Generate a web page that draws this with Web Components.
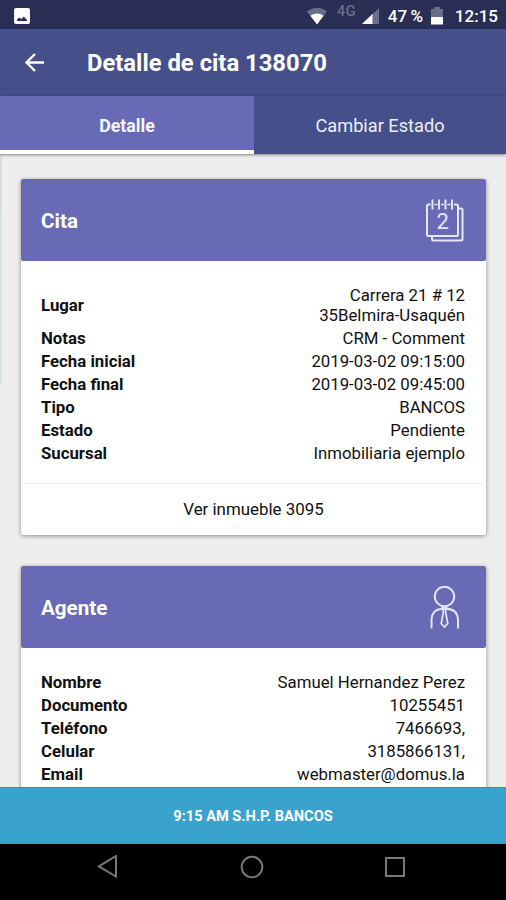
<!DOCTYPE html>
<html lang="es">
<head>
<meta charset="utf-8">
<meta name="viewport" content="width=device-width, initial-scale=1">
<title>Detalle de cita</title>
<style>
    body { margin: 0; font-family: Roboto, "Liberation Sans", sans-serif; color: #111; }
</style>
</head>
<body>
<cita-app></cita-app>

<script>
// --- Component: Android status bar ---
class StatusBar extends HTMLElement {
    constructor() {
        super();
        this.attachShadow({ mode: 'open' });
        this.shadowRoot.innerHTML = `
            <style>
                :host {
                    display: flex;
                    align-items: center;
                    box-sizing: border-box;
                    height: 29px;
                    padding: 2px 8px 0 14px;
                    background: #292e54;
                    color: #fff;
                    font-size: 17px;
                    font-weight: 500;
                    line-height: 20px;
                    white-space: nowrap;
                }
                svg { display: block; flex: none; }
                .space { flex: 1; }
                .wifi { margin-right: 9px; }
                .net { color: #6a6e8b; font-size: 15px; line-height: 16px; margin: 0 6px 9px 0; width: 19px; }
                .signal { margin-right: 9px; }
                .level { margin-right: 8px; width: 35px; font-size: 17px; word-spacing: -1px; }
                .battery { margin-right: 12px; }
            </style>
            <svg width="16" height="16" viewBox="0 0 16 16">
                <rect width="16" height="16" rx="2" fill="#fff"/>
                <path d="M3 13V11.5L5.2 9.6 7.4 11 9.8 8.6 13 12v1z" fill="#292e54"/>
            </svg>
            <span class="space"></span>
            <svg class="wifi" width="22" height="18" viewBox="0 0 22 18">
                <path d="M1 4.5Q11-3 21 4.5L11 17.5z" fill="#6a6e8b"/>
                <path d="M4.4 8.8Q11 4 17.6 8.8L11 17.5z" fill="#fff"/>
            </svg>
            <span class="net">4G</span>
            <svg class="signal" width="17" height="16" viewBox="0 0 17 16">
                <path d="M0 16 17 0V16z" fill="#6a6e8b"/>
                <path d="M0 16 10.5 6V16z" fill="#fff"/>
            </svg>
            <span class="level"><slot name="level"></slot></span>
            <svg class="battery" width="12" height="18" viewBox="0 0 12 18">
                <path d="M0 2H3V0H9V2H12V10H0z" fill="#6a6e8b"/>
                <path d="M0 10H12V17.5H0z" fill="#fff"/>
            </svg>
            <slot name="time"></slot>
        `;
    }
}
customElements.define('status-bar', StatusBar);

// --- Component: toolbar with back arrow ---
class AppToolbar extends HTMLElement {
    constructor() {
        super();
        this.attachShadow({ mode: 'open' });
        this.shadowRoot.innerHTML = `
            <style>
                :host {
                    display: flex;
                    align-items: center;
                    box-sizing: border-box;
                    height: 67px;
                    padding: 0 24px;
                    gap: 42px;
                    background: #454f8a;
                    color: #fff;
                    font-size: 23.8px;
                    font-weight: 700;
                }
                svg { display: block; }
            </style>
            <svg width="21" height="20" viewBox="0 0 21 20" fill="none" stroke="#fff" stroke-width="2.4">
                <path d="M20 9.500H2.500M11 1 2.500 9.500 11 18"/>
            </svg>
            <slot></slot>
        `;
    }
}
customElements.define('app-toolbar', AppToolbar);

// --- Component: a single tab ---
class TabItem extends HTMLElement {
    constructor() {
        super();
        this.attachShadow({ mode: 'open' });
        this.shadowRoot.innerHTML = `
            <style>
                :host {
                    display: flex;
                    flex: 1;
                    align-items: center;
                    justify-content: center;
                    box-sizing: border-box;
                    height: 58px;
                    padding-top: 4px;
                    border-bottom: 4px solid #454f8a;
                    background: #454f8a;
                    color: #eeeffa;
                    font-size: 18.2px;
                }
                :host([active]) {
                    flex: 0 0 254px;
                    background: #686ab5;
                    border-bottom-color: #fff;
                    color: #f6f6ff;
                    font-size: 17.8px;
                    font-weight: 700;
                }
            </style>
            <slot></slot>
        `;
    }
}
customElements.define('tab-item', TabItem);

// --- Component: label / value row ---
class DataRow extends HTMLElement {
    constructor() {
        super();
        this.attachShadow({ mode: 'open' });
        this.shadowRoot.innerHTML = `
            <style>
                :host {
                    display: flex;
                    align-items: center;
                    justify-content: space-between;
                    padding: 1.75px 0;
                    font-size: 16.8px;
                    line-height: 19.5px;
                }
                .label { font-weight: 700; }
                .value { max-width: 160px; text-align: right; white-space: nowrap; display: flex; justify-content: flex-end; }
                :host([wrap]) .value { display: block; white-space: normal; }
            </style>
            <span class="label"></span>
            <span class="value"><slot></slot></span>
        `;
    }
    connectedCallback() {
        this.shadowRoot.querySelector('.label').textContent = this.getAttribute('label');
    }
}
customElements.define('data-row', DataRow);

// --- Component: card with coloured header ---
class InfoCard extends HTMLElement {
    constructor() {
        super();
        this.attachShadow({ mode: 'open' });
        this.shadowRoot.innerHTML = `
            <style>
                :host {
                    display: block;
                    background: #fff;
                    border-radius: 2px;
                    box-shadow: 0 1px 4px rgba(0, 0, 0, .42);
                }
                header {
                    display: flex;
                    align-items: center;
                    justify-content: space-between;
                    box-sizing: border-box;
                    height: 82px;
                    padding: 2px 20px 0;
                    border-radius: 2px;
                    background: #686ab5;
                    color: #fff;
                    font-size: 20.6px;
                    font-weight: 700;
                }
                .rows { padding: 23.5px 21px 17.5px 20px; }
                ::slotted([slot="footer"]) {
                    display: block;
                    margin: 0 3px;
                    border-top: 1px solid #eee;
                    text-align: center;
                    font-size: 16.9px;
                    line-height: 51px;
                }
            </style>
            <header><span class="title"></span><slot name="icon"></slot></header>
            <div class="rows"><slot></slot></div>
            <slot name="footer"></slot>
        `;
    }
    connectedCallback() {
        this.shadowRoot.querySelector('.title').textContent = this.getAttribute('heading');
    }
}
customElements.define('info-card', InfoCard);

// --- Component: Android navigation bar ---
class NavBar extends HTMLElement {
    constructor() {
        super();
        this.attachShadow({ mode: 'open' });
        this.shadowRoot.innerHTML = `
            <style>
                :host {
                    display: flex;
                    justify-content: space-between;
                    box-sizing: border-box;
                    height: 57px;
                    padding: 11px 101px 0 97px;
                    border-top: 1px solid #6d8790;
                    background: #000;
                }
                svg { display: block; }
            </style>
            <svg width="22" height="24" viewBox="0 0 22 24" fill="none" stroke="#777" stroke-width="2">
                <path d="M19 1V21.5L1.8 11.3z"/>
            </svg>
            <svg width="24" height="24" viewBox="0 0 24 24" fill="none" stroke="#777" stroke-width="2">
                <circle cx="12" cy="12" r="10.3"/>
            </svg>
            <svg width="20" height="24" viewBox="0 0 20 24" fill="none" stroke="#777" stroke-width="2">
                <rect x="1" y="3" width="18" height="18"/>
            </svg>
        `;
    }
}
customElements.define('nav-bar', NavBar);

// --- Component: the whole screen ---
class CitaApp extends HTMLElement {
    constructor() {
        super();
        this.attachShadow({ mode: 'open' });
        this.shadowRoot.innerHTML = `
            <style>
                :host { display: flex; flex-direction: column; height: 900px; overflow: hidden; }
                status-bar, app-toolbar, nav, .bottom, nav-bar { flex: none; }
                nav { display: flex; box-shadow: 0 1px 3px rgba(0, 0, 0, .45); z-index: 1; }
                main {
                    flex: 1;
                    min-height: 0;
                    overflow: hidden;
                    display: flex;
                    flex-direction: column;
                    gap: 31px;
                    padding: 25px 20px 0 21px;
                    box-sizing: border-box;
                    /* edge of the previous page along the left side */
                    background:
                        linear-gradient(#dcdaea 56px, #d3e4ef 56px) 0 0 / 2px 230px no-repeat,
                        #eee;
                }
                info-card { flex: none; }
                .bottom {
                    box-sizing: border-box;
                    height: 56px;
                    border-top: 1px solid #1c95bf;
                    background: #39a3cd;
                    color: #fff;
                    font-size: 14.6px;
                    font-weight: 700;
                    line-height: 56px;
                    text-align: center;
                }
                svg { display: block; }
            </style>
            <status-bar><span slot="level">47 %</span><span slot="time">12:15</span></status-bar>
            <app-toolbar><span>Detalle de cita 138070</span></app-toolbar>
            <nav>
                <tab-item active>Detalle</tab-item>
                <tab-item>Cambiar Estado</tab-item>
            </nav>
            <main>
                <info-card heading="Cita">
                    <svg slot="icon" width="42" height="44" viewBox="0 0 42 44" fill="none" stroke="#e4e6fb" stroke-width="2">
                        <path d="M6.500 5.500H4.500Q3 5.500 3 7V35.500Q3 37 4.500 37H32.500Q34 37 34 35.500V7Q34 5.500 32.500 5.500H30"/>
                        <path d="M10.500 5.500H13.500M17 5.500H20M23.500 5.500H26.500" stroke-width="1.500"/>
                        <path d="M8.500 .5V10.500M15 .5V10.500M21.500 .5V10.500M28 .5V10.500"/>
                        <path d="M34 9.500H37Q38.500 9.500 38.500 11V40Q38.500 41.500 37 41.500H9.500Q8 41.500 8 40V37"/>
                        <text x="18.600" y="29.500" text-anchor="middle" fill="#e4e6fb" stroke="none" font-size="22" font-weight="400">2</text>
                    </svg>
                    <data-row label="Lugar" wrap>Carrera 21 # 12 35Belmira-Usaquén</data-row>
                    <data-row label="Notas">CRM - Comment</data-row>
                    <data-row label="Fecha inicial">2019-03-02 09:15:00</data-row>
                    <data-row label="Fecha final">2019-03-02 09:45:00</data-row>
                    <data-row label="Tipo">BANCOS</data-row>
                    <data-row label="Estado">Pendiente</data-row>
                    <data-row label="Sucursal">Inmobiliaria ejemplo</data-row>
                    <span slot="footer">Ver inmueble 3095</span>
                </info-card>
                <info-card heading="Agente">
                    <svg slot="icon" width="42" height="44" viewBox="0 0 42 44" fill="none" stroke="#e4e6fb" stroke-width="2">
                        <circle cx="20.500" cy="10.500" r="9.700"/>
                        <path d="M7.500 42.500V33.500Q8 23.500 18 22.700H23Q33.500 23.500 34 33.500V42.500"/>
                        <path d="M18.300 21H22.700L21.500 25.500 23.800 37.500 20.500 41 17.200 37.500 19.500 25.500z" stroke-width="1.700"/>
                    </svg>
                    <data-row label="Nombre">Samuel Hernandez Perez</data-row>
                    <data-row label="Documento">10255451</data-row>
                    <data-row label="Teléfono">7466693,</data-row>
                    <data-row label="Celular">3185866131,</data-row>
                    <data-row label="Email">webmaster@domus.la</data-row>
                </info-card>
            </main>
            <div class="bottom">9:15 AM S.H.P. BANCOS</div>
            <nav-bar></nav-bar>
        `;
    }
}
customElements.define('cita-app', CitaApp);
</script>
</body>
</html>
